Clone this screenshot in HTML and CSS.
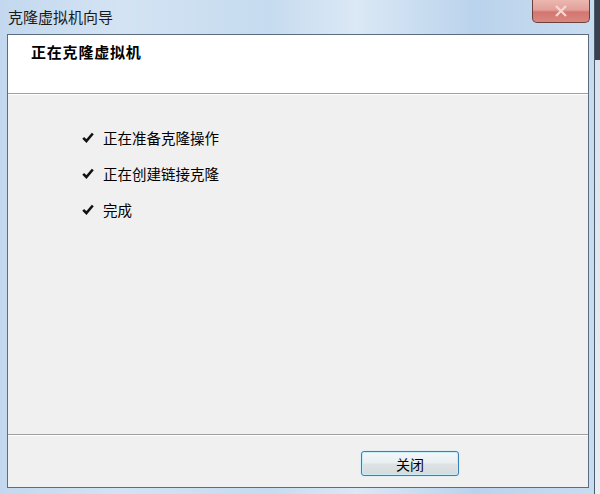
FILE: index.html
```html
<!DOCTYPE html>
<html lang="zh-CN">
<head>
<meta charset="utf-8">
<title>克隆虚拟机向导</title>
<link rel="stylesheet" href="styles.css">
</head>
<body>
<div class="window">
  <div class="titlebar">
    <span class="title">克隆虚拟机向导</span>
    <div class="close">
      <svg width="14" height="12" viewBox="0 0 14 12"><path d="M2 1 L12 11 M12 1 L2 11" stroke="#f6d6cf" stroke-width="2.4" fill="none"/></svg>
    </div>
  </div>
  <div class="client">
    <div class="header">
      <h1 class="heading">正在克隆虚拟机</h1>
    </div>
    <div class="content">
      <ul class="steps">
        <li class="step"><svg class="check" width="12" height="11" viewBox="0 0 12 11"><path d="M1.2 5.8 L4.4 9 L10.8 1.5" stroke="#111" stroke-width="2.6" fill="none"/></svg><span>正在准备克隆操作</span></li>
        <li class="step"><svg class="check" width="12" height="11" viewBox="0 0 12 11"><path d="M1.2 5.8 L4.4 9 L10.8 1.5" stroke="#111" stroke-width="2.6" fill="none"/></svg><span>正在创建链接克隆</span></li>
        <li class="step"><svg class="check" width="12" height="11" viewBox="0 0 12 11"><path d="M1.2 5.8 L4.4 9 L10.8 1.5" stroke="#111" stroke-width="2.6" fill="none"/></svg><span>完成</span></li>
      </ul>
    </div>
    <div class="footer">
      <button class="btn">关闭</button>
    </div>
  </div>
</div>
</body>
</html>
```
FILE: styles.css
```css
html, body {
  margin: 0;
  padding: 0;
}
body {
  width: 600px;
  height: 494px;
  overflow: hidden;
  background: linear-gradient(#39424c 0, #39424c 60px, #d9e4ef 60px, #e7eef5 100%);
  font-family: "Noto Sans CJK SC", "Noto Sans", sans-serif;
  display: flex;
}
.window {
  width: 595px;
  height: 494px;
  box-sizing: border-box;
  padding: 0 5px 6px 7px;
  border-right: 1px solid #4d5c6b;
  background: linear-gradient(to right, #c3d8ee 0, #d3e3f3 20%, #c6dbef 45%, #dbe8f5 60%, #bad3ec 80%, #c8dcf0 100%);
  display: flex;
  flex-direction: column;
}
.titlebar {
  height: 34px;
  display: flex;
  align-items: flex-start;
  justify-content: space-between;
}
.title {
  font-size: 15px;
  line-height: 20px;
  color: #1b1b1b;
  margin-top: 7px;
  margin-left: 1px;
}
.close {
  width: 58px;
  height: 23px;
  box-sizing: border-box;
  margin-right: -1px;
  border: 1px solid #6e3f3d;
  border-top: none;
  border-radius: 0 0 5px 5px;
  background: linear-gradient(#ebb7af 0, #e2a09a 45%, #d3766f 55%, #d98781 100%);
  display: flex;
  align-items: center;
  justify-content: center;
}
.client {
  flex: 1;
  border: 1px solid #5d6d80;
  background: #f0f0f0;
  display: flex;
  flex-direction: column;
}
.header {
  height: 58px;
  background: #fff;
  border-bottom: 1px solid #a0a0a0;
  box-shadow: 0 1px 0 #fff;
  box-sizing: content-box;
  padding-left: 23px;
}
.heading {
  margin: 7px 0 0;
  font-size: 15px;
  line-height: 20px;
  font-weight: bold;
  color: #000;
  letter-spacing: 0.8px;
}
.content {
  flex: 1;
}
.steps {
  list-style: none;
  margin: 0;
  padding: 25px 0 0 74px;
}
.step {
  height: 36px;
  display: flex;
  align-items: center;
  font-size: 14.5px;
  color: #000;
}
.check {
  margin-right: 9px;
  margin-top: 1px;
}
.footer {
  height: 53px;
  border-top: 1px solid #a0a0a0;
  box-shadow: inset 0 1px 0 #fff;
  display: flex;
  justify-content: flex-end;
  align-items: flex-start;
  padding: 16px 129px 0 0;
  box-sizing: border-box;
}
.btn {
  width: 98px;
  height: 25px;
  border: 1px solid #3c7fb1;
  border-radius: 3px;
  background: linear-gradient(#f4f8fa 0, #e9eef0 48%, #dde2e5 52%, #d6dbde 100%);
  box-shadow: inset 0 0 0 1px #c8ecf8, 0 0 2px #bfe6f5;
  font-family: "Noto Sans CJK SC", "Noto Sans", sans-serif;
  font-size: 14px;
  color: #000;
  padding: 0;
  line-height: 22px;
}
```
